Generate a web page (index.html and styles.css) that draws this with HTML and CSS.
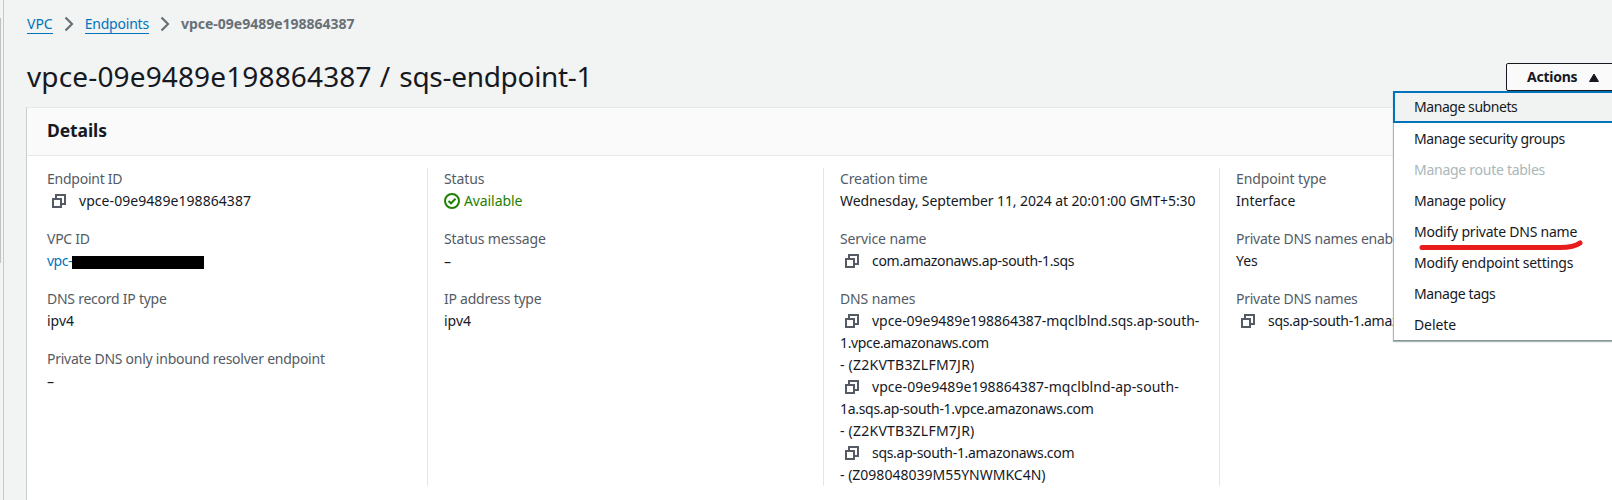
FILE: index.html
```html
<!DOCTYPE html>
<html lang="en">
<head>
<meta charset="utf-8">
<title>Endpoint details</title>
<link rel="stylesheet" href="styles.css">
</head>
<body>
<svg class="defs" width="0" height="0"><defs>
<symbol id="copy" viewBox="0 0 14 14"><path d="M1 5h8v8H1zM4 5V1h9v9H9" fill="none" stroke="#545b64" stroke-width="2"/></symbol>
<symbol id="chevron" viewBox="0 0 10 16"><path d="M1.500 1.500L8 8l-6.500 6.500" fill="none" stroke="#687078" stroke-width="2.200"/></symbol>
</defs></svg>
<div class="app">
  <div class="gutter"><div class="thumb"></div></div>
  <main class="content">
    <nav class="crumbs">
      <a class="crumb-vpc">VPC</a><svg class="chev"><use href="#chevron"/></svg>
      <a class="crumb-endpoints">Endpoints</a><svg class="chev"><use href="#chevron"/></svg>
      <b>vpce-09e9489e198864387</b>
    </nav>
    <header class="title">
      <h1><span class="h-id">vpce-09e9489e198864387</span><span class="h-slash"> / </span><span class="h-name">sqs-endpoint-1</span></h1>
      <div class="actions">
        <button><span>Actions</span><svg width="10" height="9"><path d="M5 1L9.500 8.500H.5z" fill="#16191f" stroke="#16191f" stroke-linejoin="round"/></svg></button>
        <div class="menu">
          <div class="item selected"><span class="m1">Manage subnets</span></div>
          <div class="item"><span class="m2">Manage security groups</span></div>
          <div class="item disabled"><span class="m3">Manage route tables</span></div>
          <div class="item"><span class="m4">Manage policy</span></div>
          <div class="item"><span class="m5">Modify private DNS name</span>
            <svg class="mark" width="166" height="12"><path d="M4 8.500H142Q156 8.500 162 4" fill="none" stroke="#e81c1c" stroke-width="5" stroke-linecap="round"/></svg></div>
          <div class="item"><span class="m5">Modify endpoint settings</span></div>
          <div class="item"><span class="m2">Manage tags</span></div>
          <div class="item"><span class="m8">Delete</span></div>
        </div>
      </div>
    </header>
    <section class="panel">
      <h2><span>Details</span></h2>
      <div class="grid">
        <dl>
          <div><dt>Endpoint ID</dt><dd><svg class="copy"><use href="#copy"/></svg><span class="id">vpce-09e9489e198864387</span></dd></div>
          <div><dt>VPC ID</dt><dd class="redacted"><a>vpc-</a><i></i></dd></div>
          <div><dt>DNS record IP type</dt><dd>ipv4</dd></div>
          <div><dt>Private DNS only inbound resolver endpoint</dt><dd class="dash">–</dd></div>
        </dl>
        <dl>
          <div><dt class="loose">Status</dt><dd class="ok"><svg width="16" height="16"><circle cx="8" cy="8" r="7" fill="none" stroke="#1d8102" stroke-width="2"/><path d="M4.500 8L7 10.300 11.500 5.700" fill="none" stroke="#1d8102" stroke-width="2"/></svg><span>Available</span></dd></div>
          <div><dt class="loose">Status message</dt><dd class="dash">–</dd></div>
          <div><dt>IP address type</dt><dd>ipv4</dd></div>
        </dl>
        <dl>
          <div><dt class="loose">Creation time</dt><dd><span class="date">Wednesday, September 11, 2024 at 20:01:00 GMT+5:30</span></dd></div>
          <div><dt class="loose">Service name</dt><dd><svg class="copy"><use href="#copy"/></svg><span class="service">com.amazonaws.ap-south-1.sqs</span></dd></div>
          <div><dt class="loose">DNS names</dt><dd><svg class="copy"><use href="#copy"/></svg><span class="d1">vpce-09e9489e198864387-mqclblnd.sqs.ap-south-</span><br><span class="d2">1.vpce.amazonaws.com</span><br><span class="d3">- (Z2KVTB3ZLFM7JR)</span><br><svg class="copy"><use href="#copy"/></svg><span class="id">vpce-09e9489e198864387-mqclblnd-ap-south-</span><br><span class="service">1a.sqs.ap-south-1.vpce.amazonaws.com</span><br><span class="d3">- (Z2KVTB3ZLFM7JR)</span><br><svg class="copy"><use href="#copy"/></svg><span class="service">sqs.ap-south-1.amazonaws.com</span><br><span>- (Z098048039M55YNWMKC4N)</span></dd></div>
        </dl>
        <dl>
          <div><dt class="loose">Endpoint type</dt><dd>Interface</dd></div>
          <div><dt>Private DNS names enabled</dt><dd>Yes</dd></div>
          <div><dt>Private DNS names</dt><dd><svg class="copy"><use href="#copy"/></svg><span class="service">sqs.ap-south-1.amazonaws.com</span></dd></div>
        </dl>
      </div>
    </section>
  </main>
</div>
</body>
</html>
```
FILE: styles.css
```css
* { box-sizing: border-box; }
body { margin: 0; background: #f2f3f3; color: #16191f; font: 14px/22px "Noto Sans", "Open Sans", sans-serif; overflow: hidden; }
.defs { position: absolute; }
.app { display: flex; width: 1612px; height: 500px; overflow: hidden; }
.gutter { width: 4px; border-right: 1px solid #c6cacb; padding-top: 18px; flex: none; }
.thumb { width: 1px; height: 245px; background: #c1c1c1; }
.content { flex: 1; min-width: 0; padding-left: 22px; }
.crumbs { display: flex; align-items: center; height: 22px; margin: 13px 0 0 1px; color: #687078; }
.crumbs a { color: #0073bb; line-height: 18px; border-bottom: 1px solid #0073bb; }
.crumb-endpoints { letter-spacing: -0.22px; }
.crumbs b { font-weight: 700; }
.chev { width: 10px; height: 16px; margin: 0 11px; }
.title { display: flex; justify-content: space-between; align-items: center; height: 36px; margin: 23px 0 13px; }
.title h1 { margin: 0 0 0 1px; font-size: 28px; font-weight: 400; line-height: 36px; white-space: pre; }
.h-id { letter-spacing: 0.14px; }
.h-slash { letter-spacing: 0.9px; }
.h-name { letter-spacing: -0.3px; }
.actions { position: relative; top: 1px; width: 106px; height: 28px; }
.actions button { display: flex; align-items: center; gap: 12px; width: 122px; height: 28px; border: 1px solid #16191f; border-radius: 2px; background: #fafafa; padding: 0 0 0 20px; font: 700 14px/22px "Noto Sans", sans-serif; letter-spacing: -0.25px; color: #16191f; }
.menu { position: absolute; z-index: 2; top: 28px; left: -113px; width: 235px; height: 250px; background: #fff; border: 1px solid #aab7b8; border-bottom-color: #879596; box-shadow: 0 1px 1px #aab7b8; }
.item { position: relative; height: 31px; line-height: 31px; padding-left: 20px; white-space: nowrap; }
.item.selected { height: 32px; margin: -1px 0 0 -1px; padding-left: 19px; border: 2px solid #0073bb; background: #f1f3f3; line-height: 28px; }
.item.disabled { color: #aab7b8; }
.mark { position: absolute; left: 24px; top: 23px; z-index: 3; }
.m1 { letter-spacing: -0.44px; }
.m2 { letter-spacing: -0.37px; }
.m3 { letter-spacing: -0.27px; }
.m4 { letter-spacing: -0.32px; }
.m5 { letter-spacing: -0.22px; }
.m8 { letter-spacing: -0.1px; }
.panel { height: 410px; background: #fff; border: 1px solid #e5e9e9; border-left-color: #c9cdce; margin-right: -4px; }
.panel h2 { margin: 0; height: 48px; padding: 11px 20px; border-bottom: 1px solid #e5e9e9; background: #fafafa; font-size: 17.5px; line-height: 22px; font-weight: 700; letter-spacing: -0.1px; }
.grid { display: grid; grid-template-columns: 400px 396px 396px 396px; padding-top: 12px; }
.grid dl { margin: 0; height: 318px; padding-left: 16px; border-left: 1px solid #e3e7e7; display: flex; flex-direction: column; gap: 16px; white-space: nowrap; }
.grid dl:first-child { padding-left: 20px; border-left: 0; }
.grid dt { color: #545b64; letter-spacing: -0.25px; }
.grid dt.loose { letter-spacing: -0.12px; }
.grid dt, .grid dd { margin: 0; min-height: 22px; }
.grid .dash { padding-top: 1px; line-height: 21px; }
.copy { width: 14px; height: 14px; margin: 0 13px 0 5px; vertical-align: -2px; }
.id { letter-spacing: 0.06px; }
.date { letter-spacing: -0.1px; }
.service { letter-spacing: -0.3px; }
.d1 { letter-spacing: -0.045px; }
.d2 { letter-spacing: -0.36px; }
.d3 { letter-spacing: 0.23px; }
.redacted, .ok { display: flex; align-items: center; }
.redacted a { color: #0073bb; width: 25px; letter-spacing: -0.5px; }
.redacted i { width: 132px; height: 13px; background: #000; margin-top: 3px; }
.ok { color: #1d8102; gap: 4px; letter-spacing: -0.1px; }
```
